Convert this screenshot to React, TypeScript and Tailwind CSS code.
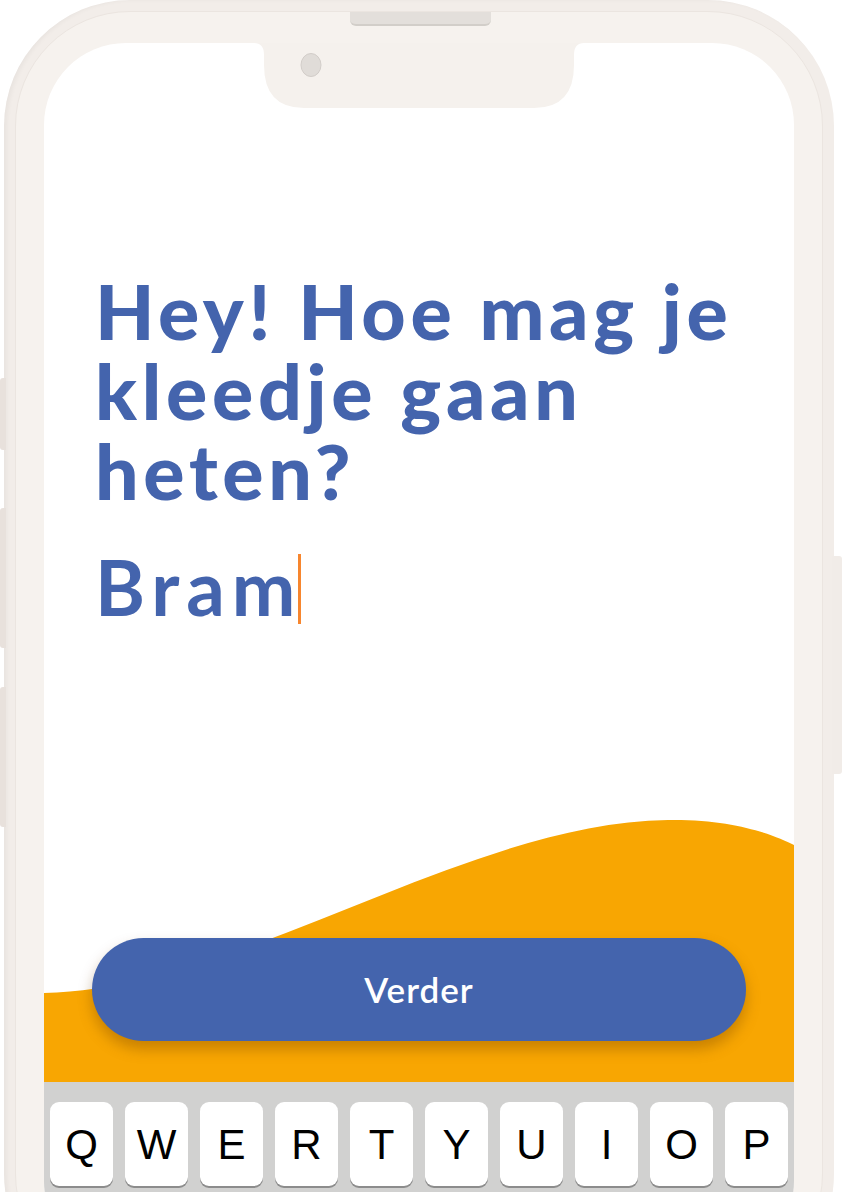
export default function App() {
  const keys = ["Q", "W", "E", "R", "T", "Y", "U", "I", "O", "P"];
  return (
    <div className="relative h-[1192px] w-[842px] overflow-hidden bg-white">
      {/* side hardware buttons */}
      <div className="absolute left-0 top-[378px] h-[72px] w-[6px] rounded-l-[3px] bg-[#e8e1dc]" />
      <div className="absolute left-0 top-[508px] h-[140px] w-[6px] rounded-l-[3px] bg-[#e8e1dc]" />
      <div className="absolute left-0 top-[687px] h-[140px] w-[6px] rounded-l-[3px] bg-[#e8e1dc]" />
      <div className="absolute right-0 top-[556px] h-[218px] w-[10px] rounded-r-[3px] bg-[#f1ece8]" />

      {/* phone body */}
      <div className="ml-[4px] h-[1300px] w-[830px] rounded-[126px] bg-[#f2ede9] p-[11px] shadow-[inset_3px_0_4px_rgba(0,0,0,0.04)]">
        <div className="h-full rounded-[115px] border border-[#ebe5e0] bg-[#f6f2ee] px-[28px] pt-[31px]">
          <div className="flex h-[1220px] flex-col overflow-hidden rounded-[82px] bg-white">
            <div className="relative flex h-[1039px] flex-col">
              {/* wave */}
              <svg
                className="absolute inset-0"
                width="750"
                height="1039"
                viewBox="0 0 750 1039"
              >
                <path
                  d="M0 950 C200 945 420 780 624 777 C690 776 730 792 750 802 L750 1039 L0 1039 Z"
                  fill="#F8A602"
                />
              </svg>

              {/* notch */}
              <svg
                className="absolute left-1/2 top-0 -translate-x-1/2"
                width="330"
                height="65"
                viewBox="0 0 330 65"
              >
                <path
                  d="M0 0 L330 0 Q320 0 320 12 L320 22 Q320 65 280 65 L50 65 Q10 65 10 22 L10 12 Q10 0 0 0 Z"
                  fill="#F5F1ED"
                />
                <ellipse cx="57" cy="22" rx="10" ry="11.5" fill="#E0DCD8" stroke="#D2CDC9" strokeWidth="1" />
              </svg>

              {/* content */}
              <div className="relative flex flex-1 flex-col pl-[51px] pt-[227px] font-['Lato',sans-serif] text-[#4464AD]">
                <h1 className="whitespace-nowrap text-[77px] font-black leading-[80px] tracking-[4.7px]">
                  <div>Hey! Hoe mag je</div>
                  <div>kleedje gaan</div>
                  <div>heten?</div>
                </h1>
                <div className="mt-[40px] flex items-center">
                  <span className="text-[76px] font-bold leading-[70px] tracking-[7px]">Bram</span>
                  <span className="ml-[-4px] mt-[4px] h-[70px] w-[3px] bg-[#F7862E]" />
                </div>

                <button className="mb-[41px] ml-[-3px] mt-auto flex h-[103px] w-[654px] items-center justify-center rounded-full bg-[#4464AD] text-[35px] font-semibold tracking-[1px] text-white shadow-[0_8px_14px_rgba(110,60,0,0.35)]">
                  Verder
                </button>
              </div>
            </div>

            {/* keyboard */}
            <div className="flex flex-1 gap-[12px] bg-[#D1D1D0] px-[6px] pt-[20px]">
              {keys.map((k) => (
                <div
                  key={k}
                  className="flex h-[84px] w-[63px] items-center justify-center rounded-[9px] bg-white font-['Liberation_Sans',sans-serif] text-[42px] text-black shadow-[0_2px_0_#8c8c8c]"
                >
                  {k}
                </div>
              ))}
            </div>
          </div>
        </div>
      </div>

      {/* speaker */}
      <div className="absolute left-[350px] top-[12px] h-[14px] w-[141px] rounded-b-[6px] border-b-2 border-[#d2cec9] bg-[#e3dfdb]" />
    </div>
  );
}
